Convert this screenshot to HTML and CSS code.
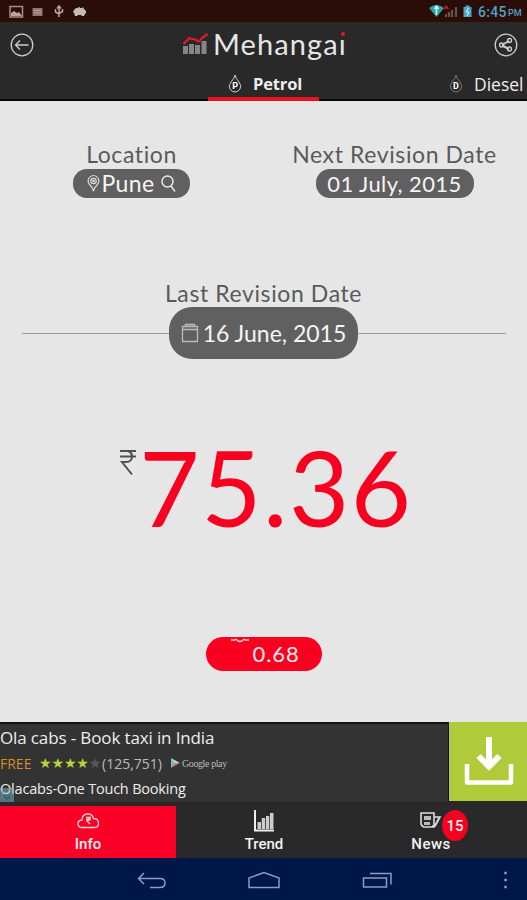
FILE: index.html
```html
<!DOCTYPE html>
<html lang="en">
<head>
<meta charset="utf-8">
<title>Mehangai</title>
<link rel="stylesheet" href="styles.css">
</head>
<body>
<div class="status">
  <svg class="status-left" width="90" height="22" viewBox="0 0 90 22">
    <rect x="10" y="6.500" width="12.500" height="10.500" fill="none" stroke="#a78f88" stroke-width="1.500"/>
    <path d="M11 16v-3l3-2 3 2 2-1 3 4z" fill="#b9a49e"/>
    <rect x="32.500" y="8" width="10" height="8" fill="#8f7770"/>
    <path d="M34 10.500h7M34 13h7" stroke="#b9a49e"/>
    <path d="M59 17V6.500M57 8.500l2-2.500 2 2.500M55.500 9v3l3.500 2M62.500 9v2.500L59 13.500" fill="none" stroke="#b9a49e" stroke-width="1.500"/>
    <path d="M74 10l2-2h2l1-1.500 1 1.500h2l1-1 1 2 2 2v2l-1 1-1 2h-2l-1-1h-3l-1 1h-2l-1-3-1-1z" fill="#c8b8b4"/>
  </svg>
  <div class="status-right">
    <svg width="46" height="22" viewBox="0 0 46 22">
      <path d="M0 8q7.500-6 15 0l-7.500 9z" fill="#2da2a8"/><path d="M7.500 6v9M5.500 9l2-3 2 3" stroke="#d7ffff" stroke-width="1.500" fill="none"/>
      <path d="M17 17v-3M20 17v-5M23 17V10M27 17V7" stroke="#65534e" stroke-width="2.200"/>
      <path d="M15.500 6l4 3M15.500 9l3-3" stroke="#d71920" stroke-width="1.500"/>
      <path d="M34.500 7h2V5.500h4V7h2v10h-8z" fill="#4da5cc"/><path d="M39.500 8l-2.500 4h3l-2 4" stroke="#e5f8ff" fill="none"/>
    </svg>
    <span class="time">6:45</span><span class="pm">PM</span>
  </div>
</div>
<header class="header">
  <div class="bar">
    <svg class="round" width="24" height="24" viewBox="0 0 24 24" fill="none" stroke="#ccc" stroke-width="1.300"><circle cx="12" cy="12" r="10.800"/><path d="M18.500 12h-13M10 7.500L5.500 12l4.500 4.500"/></svg>
    <div class="brand">
      <svg width="27" height="24" viewBox="0 0 27 24"><path d="M1 21v-8h5v8zM7 21V11h5v10zM13 21v-9h5v9zM19.500 21V8h5v13z" fill="#858585"/><path d="M1.500 11l6-6q1 1 3 1t4 1q1 2 3 1 2-3 4-4l4-3" fill="none" stroke="#e21b2c" stroke-width="2.200"/></svg>
      <span class="brand-name">Mehanga<span class="brand-i">ı<i></i></span></span>
    </div>
    <svg class="round" width="24" height="24" viewBox="0 0 24 24" fill="none" stroke="#ccc" stroke-width="1.300"><circle cx="12" cy="12" r="10.800"/><path d="M8 12l7-4M8 12.500l7 3.500" stroke-width="2"/><circle cx="7.500" cy="12" r="2"/><circle cx="15.500" cy="7.500" r="2"/><circle cx="15.500" cy="16" r="2"/></svg>
  </div>
  <div class="tabs">
    <div class="tab tab-active">
      <svg width="14" height="20" viewBox="0 0 14 20"><path d="M7 1Q6 5 3 8 0 12 2 15q2 3 5 3t5-3q2-3-1-7-3-3-4-7z" fill="none" stroke="#ccc"/><text x="7" y="15" text-anchor="middle" class="drop">P</text></svg>
      <span>Petrol</span>
    </div>
    <div class="tab tab-diesel">
      <svg width="14" height="20" viewBox="0 0 14 20"><path d="M7 1Q6 5 3 8 0 12 2 15q2 3 5 3t5-3q2-3-1-7-3-3-4-7z" fill="none" stroke="#777"/><text x="7" y="15" text-anchor="middle" class="drop">D</text></svg>
      <span>Diesel</span>
    </div>
  </div>
</header>
<main class="main">
  <section class="info">
    <div class="field">
      <div class="label location-label">Location</div>
      <div class="pill pill-city">
        <svg width="15" height="19" viewBox="0 0 15 19" fill="none" stroke="#ddd" stroke-width="1.200"><path d="M7.500 17Q6.500 13 3.500 10.500 1 7 3 4q2-2.500 4.500-2.500T12 4q2 3-.5 6.500Q8.500 13 7.500 17z"/><circle cx="7.500" cy="7" r="2.700"/><circle cx="7.500" cy="7" r=".7"/></svg>
        <span>Pune</span>
        <svg class="search" width="17" height="19" viewBox="0 0 17 19" fill="none" stroke="#eee" stroke-width="1.400"><circle cx="7.500" cy="7.500" r="5.500"/><path d="M11 12l4 5.500"/></svg>
      </div>
    </div>
    <div class="field">
      <div class="label next-label">Next Revision Date</div>
      <div class="pill pill-next">01 July, 2015</div>
    </div>
  </section>
  <section class="last">
    <div class="label last-label">Last Revision Date</div>
    <div class="divider">
      <div class="pill-date">
        <svg width="18" height="20" viewBox="0 0 18 20" fill="none" stroke="#bbb" stroke-width="1.300"><path d="M1.500 3.500h15v15h-15zM1.500 6.500h15M4.500 3.500v-2h9v2"/></svg>
        <span>16 June, 2015</span>
      </div>
    </div>
  </section>
  <section class="price">
    <svg class="rupee" width="18" height="27" viewBox="0 0 18 27" fill="none" stroke="#505050" stroke-width="2"><path d="M1 2h16M1 7.500h16M4 2h3q6 0 6 5.500T7 13H3l10 12.500"/></svg>
    <span class="amount">75.36</span>
  </section>
  <div class="change">
    <svg width="20" height="6" viewBox="0 0 20 6" fill="none" stroke="#ffd5d9" stroke-width="1.300"><path d="M1 3h4l1-1M19 3h-4l-1-1M6 2q4 5 8 0"/></svg>
    <span>0.68</span>
  </div>
</main>
<section class="ad">
  <div class="ad-copy">
    <div class="ad-title">Ola cabs - Book taxi in India</div>
    <div class="ad-meta">
      <span class="free">FREE</span><span class="stars">★★★★<span class="star-off">★</span></span><span class="votes">(125,751)</span>
      <svg width="9" height="10" viewBox="0 0 9 10"><path d="M0 0l5 5-5 5z" fill="#68c6d4"/><path d="M0 0l9 5H4z" fill="#c8d6b2"/><path d="M0 10l9-5H4z" fill="#d66b60"/></svg><span class="gplay">Google play</span>
    </div>
    <div class="ad-sub">Olacabs-One Touch Booking<svg class="adchoice" width="14" height="14" viewBox="0 0 14 14"><path d="M0 0h14v14H0z" fill="#9ebcc4" opacity=".65"/><circle cx="7" cy="6" r="5" fill="none" stroke="#5ba0b1" stroke-width="2"/><path d="M4 8l3 3 3-3" fill="none" stroke="#257f98" stroke-width="2"/></svg></div>
  </div>
  <div class="download">
    <svg width="50" height="50" viewBox="0 0 50 50" fill="none" stroke="#fff" stroke-linejoin="round"><path d="M3 27v18.500h44V27" stroke-width="4.500"/><path d="M25 0v29" stroke-width="6"/><path d="M14.500 19l10.500 10.500L35.500 19" stroke-width="6" stroke-linejoin="miter"/></svg>
  </div>
</section>
<nav class="nav">
  <div class="nav-item nav-active">
    <svg width="24" height="24" viewBox="0 0 24 24" fill="none" stroke="#ffd5da" stroke-width="1.300"><path d="M6 18.500q-4 0-4-4 0-3 4-3.500Q6 5.500 11 5q5-.5 6.500 4.500 5 0 5 5 0 4-4 4zM10 8.500h5M10 10.500h5M11 8.500q3 0 2 2.500l-2 1 3 3"/></svg>
    <span>Info</span>
  </div>
  <div class="nav-item">
    <svg width="24" height="24" viewBox="0 0 24 24"><path d="M3 1v20.500h19" fill="none" stroke="#eee" stroke-width="2"/><path d="M5.500 20v-7h3.500v7zM9.700 20V9h3.500v11zM14 20V7h3.300v13zM18 20V4h3.500v16z" fill="#ccc"/></svg>
    <span>Trend</span>
  </div>
  <div class="nav-item nav-news">
    <svg width="24" height="24" viewBox="0 0 24 24"><path d="M2 4h13v14H5q-3-1-3-4zM15 8h6l-5 9h-3" fill="none" stroke="#ddd" stroke-width="1.600"/><path d="M5 7h7v4H5zM5 13h6v3H5z" fill="#bbb"/><path d="M20 9l-4 8" stroke="#ccc" stroke-width="2"/></svg>
    <span>News</span>
    <b class="badge">15</b>
  </div>
</nav>
<div class="system">
  <svg width="527" height="42" viewBox="0 0 527 42" fill="none" stroke="#8f9bc0" stroke-width="1.500"><path d="M150 29.500h10q5 0 5-4.500t-5-4.500h-21M144 15l-5.500 5.500 5.500 5.500"/><path d="M249 29.500V20l15-5.500L279 20v9.500z"/><path d="M363.500 20h23v9h-23zM370 15.500h21v11" /><path d="M505.500 15h.01M505.500 22h.01M505.500 29h.01" stroke-width="2.500" stroke-linecap="square"/></svg>
</div>
</body>
</html>
```

FILE: styles.css
```css
* { box-sizing: border-box; }
body { margin: 0; width: 527px; height: 900px; overflow: hidden; background: #e6e6e6; font-family: Lato, sans-serif; font-variant-ligatures: none; display: flex; flex-direction: column; }
svg { display: block; flex: none; }
span { white-space: nowrap; }
.status { height: 22px; background: #2a0d06; display: flex; justify-content: space-between; }
.status-right { display: flex; width: 98px; color: #4da3c9; font-family: Roboto, sans-serif; line-height: 24px; }
.time { font-size: 14px; font-weight: 500; letter-spacing: .3px; margin-left: 3px; width: 30px; }
.pm { font-size: 9px; font-weight: 500; line-height: 27px; }
.header { height: 79px; background: #292929; border-bottom: 2px solid #080808; }
.bar { height: 45px; display: flex; justify-content: space-between; padding: 0 9px 0 10px; align-items: center; }
.brand { display: flex; align-items: center; margin-left: 2px; }
.brand-name { font-size: 29px; line-height: 42px; height: 44px; margin-left: 4px; color: #e6e6e6; width: 135px; letter-spacing: 1.1px; }
.brand-i { position: relative; }
.brand-i i { position: absolute; width: 4px; height: 4px; border-radius: 2px; background: #e21b2c; left: 2px; top: 6px; }
.tabs { height: 34px; display: flex; padding-left: 208px; color: #eee; font: 17.500px/34px "Open Sans", sans-serif; }
.tab { display: flex; align-items: center; }
.tab-active { width: 111px; height: 34px; padding: 4px 0 0 20px; gap: 11px; font-weight: 700; font-size: 16.500px; letter-spacing: -.15px; border-bottom: 4px solid #eb101e; }
.tab-diesel { margin-left: 130px; gap: 11px; height: 34px; }
.drop { font: 700 9px Roboto, sans-serif; fill: #fff; }
.main { height: 621px; display: flex; flex-direction: column; align-items: center; }
.info { width: 527px; display: grid; grid-template-columns: 263px 263px; padding-top: 39px; }
.field { display: flex; flex-direction: column; align-items: center; }
.label { color: #5a5a5a; font-size: 23px; line-height: 28px; white-space: nowrap; letter-spacing: .6px; }
.pill { height: 29px; margin-top: 1px; border-radius: 14px; background: #606060; color: #f5f5f5; font-size: 22px; line-height: 29px; display: flex; align-items: center; justify-content: center; letter-spacing: .4px; }
.pill-city { width: 117px; font-size: 23px; }
.search { margin-left: 5px; }
.pill-next { width: 158px; }
.last { margin-top: 81px; width: 483px; display: flex; flex-direction: column; align-items: center; }
.divider { width: 484px; display: flex; align-items: center; }
.divider::before, .divider::after { content: ""; flex: 1; height: 1px; background: #999; }
.pill-date { height: 52px; width: 189px; border-radius: 23px; background: #606060; color: #f5f5f5; display: flex; align-items: center; justify-content: center; gap: 4px; font-size: 23px; }
.price { display: flex; height: 124px; margin-top: 66px; padding-left: 5px; }
.rupee { margin-top: 24px; }
.amount { color: #fa0020; font-size: 104px; line-height: 124px; margin-left: 2px; letter-spacing: 1.5px; }
.change { width: 116px; height: 34px; margin-top: 88px; border-radius: 17px; background: #fa0020; color: #ffebed; font-size: 22px; letter-spacing: .9px; line-height: 34px; display: flex; padding-left: 24px; }
.change span { margin-left: 3px; }
.ad { height: 84px; background: #292929; display: flex; font-family: "Open Sans", sans-serif; color: #eee; }
.ad-copy { width: 449px; height: 80px; border-top: 2px solid #111; border-right: 1px solid #111; background: #333; }
.ad-title { font-size: 17px; letter-spacing: -.13px; line-height: 27px; height: 27px; white-space: nowrap; }
.ad-meta { display: flex; align-items: center; height: 24px; font-size: 14px; color: #bbb; }
.free { color: #d58b29; width: 39px; font-size: 14px; }
.stars { width: 63px; font: 14px/20px "DejaVu Sans", sans-serif; letter-spacing: -.1px; color: #b7d439; }
.star-off { color: #595959; }
.votes { width: 69px; }
.gplay { margin-left: 2px; font: 10px "Liberation Serif", serif; letter-spacing: -.4px; }
.ad-sub { position: relative; font-size: 14.500px; letter-spacing: -.2px; line-height: 28px; height: 27px; white-space: nowrap; }
.adchoice { position: absolute; left: 0; top: 13px; opacity: .7; }
.download { width: 78px; height: 79px; background: #b0cb3a; display: flex; padding: 15px 0 0 15px; }
.nav { height: 52px; display: grid; grid-template-columns: 176px 176px 175px; background: #292929; font: 500 15px/18px Roboto, sans-serif; color: #f3f3f3; }
.nav-item { position: relative; display: flex; flex-direction: column; align-items: center; padding-top: 3px; }
.nav-item span { margin-top: 2px; }
.nav-news { padding-right: 17px; }
.nav-news span { letter-spacing: .5px; }
.nav-active { background: #fa0026; }
.badge { position: absolute; left: 90px; top: 4px; width: 26px; height: 31px; border-radius: 50%; background: #f5001e; text-align: center; font: 500 15px/32px Roboto, sans-serif; }
.system { height: 42px; background: #00174a; }
```
